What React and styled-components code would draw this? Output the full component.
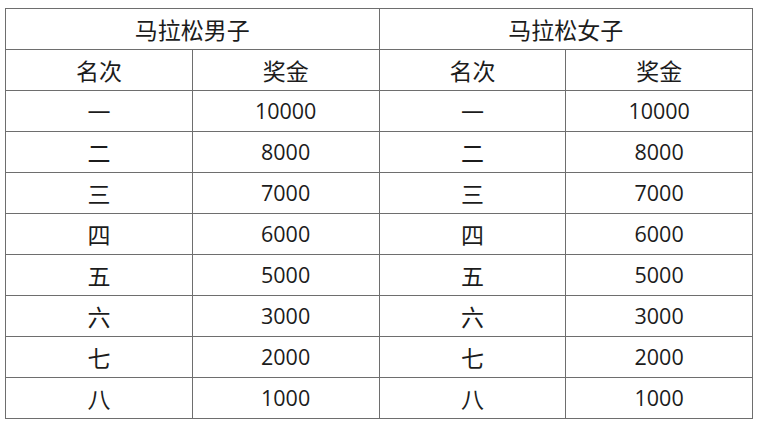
import React from "react";
import styled, { createGlobalStyle } from "styled-components";

const GlobalStyle = createGlobalStyle`
  body {
    margin: 0;
    background: #ffffff;
    font-family: "Open Sans", "Noto Sans CJK SC", sans-serif;
  }
`;

const Page = styled.div`
  padding: 8px 0 0 5px;
`;

const Table = styled.table`
  border-collapse: collapse;
  width: 748px;
  table-layout: fixed;
  color: #1c1c1c;
`;

const Cell = styled.td`
  border: 1.5px solid #6e6e6e;
  height: 40px;
  padding: 0;
  text-align: center;
  vertical-align: middle;
  line-height: 1;
  font-size: ${(p) => (p.$cjk ? "23px" : "21.5px")};
  font-family: ${(p) =>
    p.$cjk ? '"Noto Sans CJK SC", sans-serif' : '"Open Sans", sans-serif'};
`;

const HeadCell = styled(Cell).attrs({ as: "th" })`
  font-weight: normal;
`;

const ranks = ["一", "二", "三", "四", "五", "六", "七", "八"];
const prizes = [10000, 8000, 7000, 6000, 5000, 3000, 2000, 1000];

export default function App() {
  return (
    <Page>
      <GlobalStyle />
      <Table>
        <thead>
          <tr>
            <HeadCell $cjk colSpan={2}>马拉松男子</HeadCell>
            <HeadCell $cjk colSpan={2}>马拉松女子</HeadCell>
          </tr>
          <tr>
            <HeadCell $cjk>名次</HeadCell>
            <HeadCell $cjk>奖金</HeadCell>
            <HeadCell $cjk>名次</HeadCell>
            <HeadCell $cjk>奖金</HeadCell>
          </tr>
        </thead>
        <tbody>
          {ranks.map((rank, i) => (
            <tr key={rank}>
              <Cell $cjk>{rank}</Cell>
              <Cell>{prizes[i]}</Cell>
              <Cell $cjk>{rank}</Cell>
              <Cell>{prizes[i]}</Cell>
            </tr>
          ))}
        </tbody>
      </Table>
    </Page>
  );
}
